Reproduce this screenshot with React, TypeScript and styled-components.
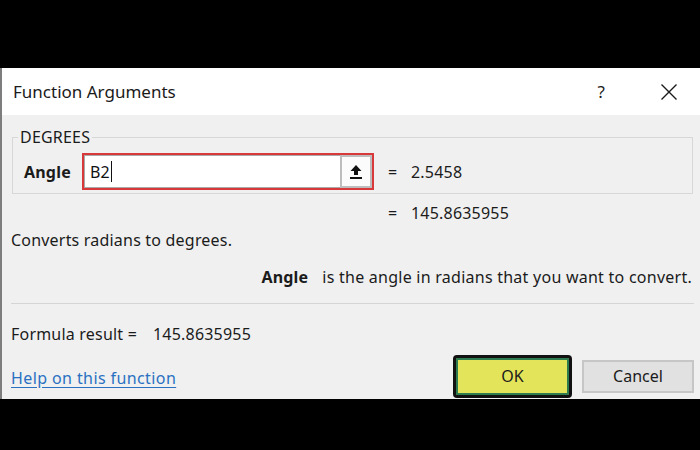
import styled, { createGlobalStyle } from 'styled-components';

const GlobalStyle = createGlobalStyle`
  html, body {
    margin: 0;
    padding: 0;
    background: #000;
  }
  * {
    box-sizing: border-box;
  }
`;

const FONT = `"Noto Sans", "Open Sans", "Liberation Sans", sans-serif`;

export default function App() {
  return (
    <>
      <GlobalStyle />
      <Page>
        <Dialog>
          <TitleBar>
            <Title>Function Arguments</Title>
            <TitleActions>
              <HelpGlyph>?</HelpGlyph>
              <CloseButton aria-label="Close">
                <svg width="18" height="18" viewBox="0 0 18 18">
                  <path d="M1.5 1.5 L16.5 16.5 M16.5 1.5 L1.5 16.5" stroke="#1a1a1a" strokeWidth="1.4" fill="none" />
                </svg>
              </CloseButton>
            </TitleActions>
          </TitleBar>

          <Body>
            <GroupBox>
              <Legend>DEGREES</Legend>
              <ArgRow>
                <ArgLabel>Angle</ArgLabel>
                <InputFrame>
                  <InputField>
                    <InputText>B2</InputText>
                    <Caret />
                  </InputField>
                  <CollapseButton>
                    <svg width="14" height="16" viewBox="0 0 14 16">
                      <path d="M7 1 L1.5 7 H5 V11 H9 V7 H12.5 Z" fill="#111" />
                      <rect x="1" y="13" width="12" height="2" fill="#111" />
                    </svg>
                  </CollapseButton>
                </InputFrame>
                <Equals>=</Equals>
                <Value>2.5458</Value>
              </ArgRow>
            </GroupBox>

            <ResultRow>
              <Equals>=</Equals>
              <Value>145.8635955</Value>
            </ResultRow>

            <Description>Converts radians to degrees.</Description>

            <ArgHelp>
              <b>Angle</b>
              <span>is the angle in radians that you want to convert.</span>
            </ArgHelp>

            <Separator />

            <FormulaRow>
              <span>Formula result =</span>
              <span>145.8635955</span>
            </FormulaRow>

            <Footer>
              <HelpLink href="#">Help on this function</HelpLink>
              <Buttons>
                <DialogButton $primary>OK</DialogButton>
                <DialogButton>Cancel</DialogButton>
              </Buttons>
            </Footer>
          </Body>
        </Dialog>
      </Page>
    </>
  );
}

const Page = styled.div`
  width: 700px;
  height: 450px;
  padding-top: 68px;
  background: #000;
  overflow: hidden;
  font-family: ${FONT};
  color: #1b1b1b;
`;

const Dialog = styled.div`
  width: 700px;
  height: 331px;
  background: #f0f0f0;
  border-left: 2px solid #7d7d7d;
  display: flex;
  flex-direction: column;
`;

const TitleBar = styled.div`
  height: 47px;
  background: #fff;
  display: flex;
  align-items: center;
  justify-content: space-between;
  padding: 0 22px 0 11px;
`;

const Title = styled.div`
  font-size: 17px;
  color: #1a1a1a;
`;

const TitleActions = styled.div`
  display: flex;
  align-items: center;
  gap: 55px;
`;

const HelpGlyph = styled.span`
  font-size: 17px;
  color: #1a1a1a;
`;

const CloseButton = styled.span`
  display: flex;
  width: 18px;
  height: 18px;
`;

const Body = styled.div`
  flex: 1;
  display: flex;
  flex-direction: column;
  padding: 0 6px 0 9px;
  font-size: 16px;
  letter-spacing: 0.2px;
`;

const GroupBox = styled.fieldset`
  margin: 12px 1px 0 1px;
  padding: 6px 10px 3px 11px;
  border: 1px solid #d7d7d7;
  min-width: 0;
`;

const Legend = styled.legend`
  padding: 0 2px;
  margin-left: -6px;
  font-size: 16px;
  line-height: 20px;
  color: #1b1b1b;
`;

const ArgRow = styled.div`
  display: grid;
  grid-template-columns: 58px 292px 14px 23px auto;
  grid-template-areas: 'label input . eq value';
  align-items: center;
  height: 37px;
`;

const ArgLabel = styled.div`
  grid-area: label;
  font-weight: 700;
`;

const InputFrame = styled.div`
  grid-area: input;
  height: 37px;
  border: 2px solid #d8383a;
  display: flex;
  background: #fff;
`;

const InputField = styled.div`
  flex: 1;
  display: flex;
  align-items: center;
  padding-left: 5px;
  border: 1px solid #a9a9a9;
  border-right: none;
`;

const InputText = styled.span`
  font-size: 16px;
  color: #111;
`;

const Caret = styled.span`
  width: 1px;
  height: 21px;
  background: #111;
  margin-left: 1px;
`;

const CollapseButton = styled.div`
  width: 32px;
  display: flex;
  align-items: center;
  justify-content: center;
  border: 2px solid #bdbdbd;
  background: #fbfbfb;
`;

const Equals = styled.span`
  grid-area: eq;
  width: 23px;
`;

const Value = styled.span`
  grid-area: value;
`;

const ResultRow = styled.div`
  display: flex;
  align-items: center;
  height: 37px;
  padding-left: 377px;
`;

const Description = styled.div`
  height: 20px;
  display: flex;
  align-items: center;
  margin-top: -1px;
`;

const ArgHelp = styled.div`
  height: 20px;
  margin-top: 17px;
  display: flex;
  align-items: center;
  justify-content: flex-end;
  gap: 14px;
  padding-right: 2px;

  b {
    font-weight: 700;
  }

  span {
    letter-spacing: 0.25px;
  }
`;

const Separator = styled.div`
  height: 1px;
  margin-top: 16px;
  background: #d5d5d5;
`;

const FormulaRow = styled.div`
  height: 20px;
  margin-top: 20px;
  display: flex;
  align-items: center;
  gap: 16px;
`;

const Footer = styled.div`
  margin-top: 10px;
  height: 44px;
  display: flex;
  align-items: center;
  justify-content: space-between;
`;

const HelpLink = styled.a`
  color: #2a70c2;
  text-decoration: underline;
  text-underline-offset: 3px;
  letter-spacing: 0.4px;
  padding-top: 4px;
`;

const Buttons = styled.div`
  display: flex;
  align-items: center;
  gap: 10px;
`;

const DialogButton = styled.button<{ $primary?: boolean }>`
  font-family: ${FONT};
  font-size: 16px;
  color: #1b1b1b;
  width: ${(p) => (p.$primary ? '119px' : '112px')};
  height: ${(p) => (p.$primary ? '43px' : '33px')};
  background: ${(p) => (p.$primary ? '#e4e45a' : '#e1e1e1')};
  border: ${(p) => (p.$primary ? '3px solid #111' : '2px solid #c6c6c6')};
  border-radius: ${(p) => (p.$primary ? '4px' : '0')};
  box-shadow: ${(p) => (p.$primary ? 'inset 0 0 0 2px #2e7b50' : 'none')};
  padding: 0;
`;
